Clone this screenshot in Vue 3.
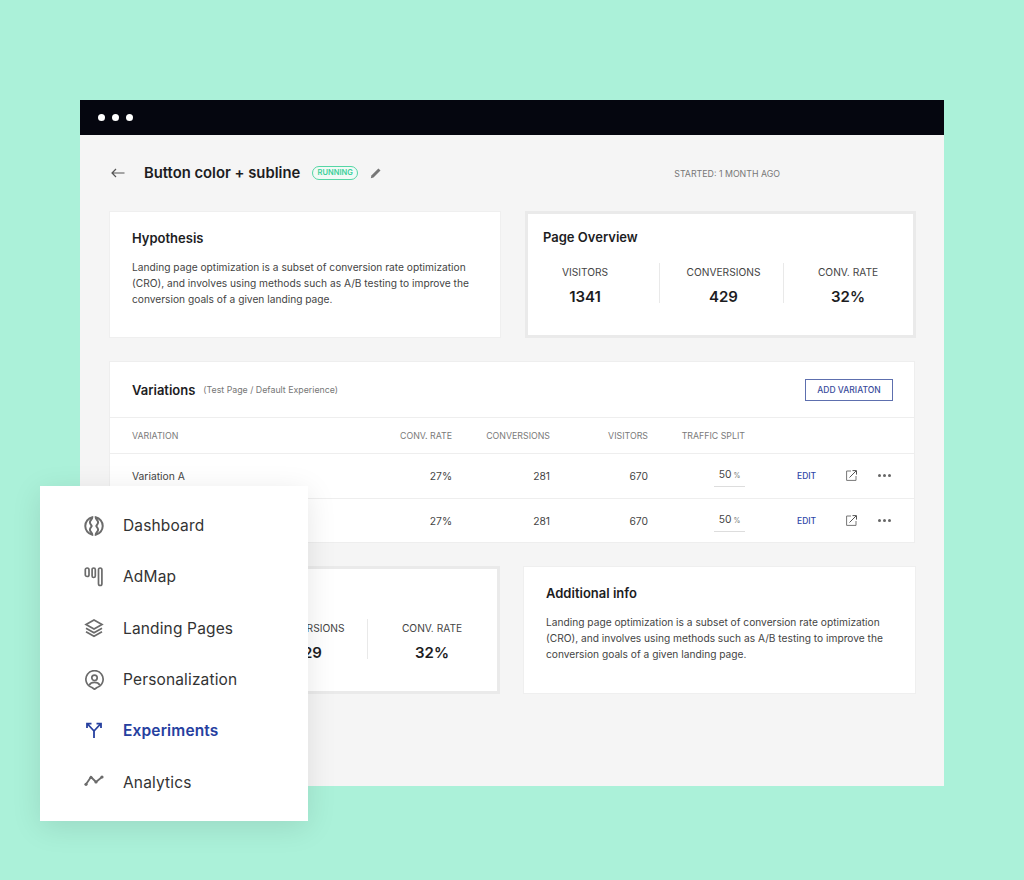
<script setup>
const stats = [
  { label: "VISITORS", value: "1341" },
  { label: "CONVERSIONS", value: "429" },
  { label: "CONV. RATE", value: "32%" },
];

// first cell of the lower card sits under the sidebar
const lowerStats = [
  { label: "", value: "" },
  { label: "CONVERSIONS", value: "429" },
  { label: "CONV. RATE", value: "32%" },
];

const rows = [
  { id: 1, name: "Variation A", rate: "27%", conversions: 281, visitors: 670, split: 50 },
  { id: 2, name: "", rate: "27%", conversions: 281, visitors: 670, split: 50 },
];

const hypothesis =
  "Landing page optimization is a subset of conversion rate optimization (CRO), and involves using methods such as A/B testing to improve the conversion goals of a given landing page.";

const nav = [
  { label: "Dashboard", icon: "dashboard" },
  { label: "AdMap", icon: "admap" },
  { label: "Landing Pages", icon: "layers" },
  { label: "Personalization", icon: "person" },
  { label: "Experiments", icon: "fork", active: true },
  { label: "Analytics", icon: "chart" },
];
</script>

<template>
  <div class="stage">
    <div class="window">
      <div class="titlebar">
        <span class="dot"></span>
        <span class="dot"></span>
        <span class="dot"></span>
      </div>
      <div class="content">
        <header class="page-head">
          <svg class="back" width="14" height="10" viewBox="0 0 14 10" fill="none">
            <path d="M13.500 5H1M5 1 1 5l4 4" stroke="#555" stroke-width="1.200" />
          </svg>
          <h1>Button color + subline</h1>
          <span class="badge">RUNNING</span>
          <svg class="pencil" width="12" height="12" viewBox="0 0 12 12">
            <path d="M.8 11.200 1.400 8.500 8.400 1.500l2.100 2.100-7 7z" fill="#777" />
          </svg>
          <span class="started">STARTED: 1 MONTH AGO</span>
        </header>

        <section class="card-row">
          <article class="card info">
            <h2>Hypothesis</h2>
            <p>{{ hypothesis }}</p>
          </article>
          <article class="card overview">
            <h2>Page Overview</h2>
            <div class="stats">
              <div v-for="s in stats" :key="s.label" class="stat">
                <span class="stat-label">{{ s.label }}</span>
                <strong>{{ s.value }}</strong>
              </div>
            </div>
          </article>
        </section>

        <section class="table-card">
          <div class="table-title">
            <h2>Variations</h2>
            <span class="sub">(Test Page / Default Experience)</span>
            <button class="add">ADD VARIATON</button>
          </div>
          <div class="grid-row heading">
            <span>VARIATION</span>
            <span class="num">CONV. RATE</span>
            <span class="num">CONVERSIONS</span>
            <span class="num">VISITORS</span>
            <span class="num">TRAFFIC SPLIT</span>
          </div>
          <div v-for="r in rows" :key="r.id" class="grid-row body-row">
            <span>{{ r.name }}</span>
            <span class="num">{{ r.rate }}</span>
            <span class="num">{{ r.conversions }}</span>
            <span class="num">{{ r.visitors }}</span>
            <span class="split">{{ r.split }}<small>%</small></span>
            <span class="actions">
              <a class="edit">EDIT</a>
              <svg class="open" width="11" height="11" viewBox="0 0 11 11" fill="none">
                <path d="M5 1H.6v9.400H10V6" stroke="#777" />
                <path d="M3.500 7.500 10 1M6.500.6h4v4" stroke="#555" />
              </svg>
              <span class="more"><i></i><i></i><i></i></span>
            </span>
          </div>
        </section>

        <section class="card-row bottom">
          <article class="card overview">
            <div class="stats">
              <div v-for="(s, i) in lowerStats" :key="i" class="stat">
                <span class="stat-label">{{ s.label }}</span>
                <strong>{{ s.value }}</strong>
              </div>
            </div>
          </article>
          <article class="card info">
            <h2>Additional info</h2>
            <p>{{ hypothesis }}</p>
          </article>
        </section>
      </div>
    </div>

    <nav class="sidebar">
      <a v-for="item in nav" :key="item.label" :class="['nav-item', { active: item.active }]">
        <svg width="20" height="20" viewBox="0 0 20 20" fill="none" stroke="#6b6b6b" stroke-width="1.700">
          <template v-if="item.icon === 'dashboard'">
            <path stroke-width="2" d="M8.300 1.300a8.900 8.900 0 0 0 0 17.400c.1-2-2.400-2.900-2.400-4.900s1.800-2.800 1.800-3.800-1.800-1.800-1.800-3.800 2.500-2.900 2.400-4.900Z" />
            <path stroke-width="2" d="M11.700 1.300a8.900 8.900 0 0 1 0 17.400c-.1-2 2.400-2.900 2.400-4.900s-1.800-2.800-1.800-3.800 1.800-1.800 1.800-3.800-2.500-2.900-2.400-4.900Z" />
          </template>
          <template v-else-if="item.icon === 'admap'">
            <rect x="1.300" y="1" width="3.700" height="8.500" rx="1.800" />
            <rect x="8.100" y="1" width="3.200" height="9.500" rx="1.600" />
            <rect x="14.500" y="1" width="3.400" height="17.500" rx="1.700" />
          </template>
          <template v-else-if="item.icon === 'layers'">
            <path d="M10 2 18 6.500 10 11 2 6.500Z" />
            <path d="M2 10.200 10 14.700l8-4.500M2 13.800l8 4.500 8-4.500" />
          </template>
          <template v-else-if="item.icon === 'person'">
            <g transform="translate(.5 0)">
              <path d="M10 19.300 7.500 17.500A8.600 8.600 0 1 1 12.500 17.500Z" />
              <circle cx="10" cy="7.800" r="2.700" />
              <path d="M4.800 15c1-2 3-2.600 5.200-2.600s4.200.6 5.200 2.600" />
            </g>
          </template>
          <template v-else-if="item.icon === 'fork'">
            <path d="M10 17V10L3.500 3M10 10l6.500-7M3 7V2.700h4.500M12.500 2.700H17V7" stroke="#26409f" stroke-width="1.800" />
          </template>
          <template v-else>
            <path d="M2 12.300 7 5l5 5 6-5" stroke-width="1.800" />
            <circle cx="2" cy="12.300" r="1.600" fill="#6b6b6b" stroke="none" />
            <circle cx="7" cy="5.500" r="1.600" fill="#6b6b6b" stroke="none" />
            <circle cx="12" cy="10" r="1.600" fill="#6b6b6b" stroke="none" />
            <circle cx="18" cy="5" r="1.600" fill="#6b6b6b" stroke="none" />
          </template>
        </svg>
        <span>{{ item.label }}</span>
      </a>
    </nav>
  </div>
</template>

<style scoped>
.stage {
  position: relative;
  width: 1024px;
  height: 880px;
  box-sizing: border-box;
  padding: 100px 80px 94px;
  background: #abf1d9;
  font-family: Inter, "Liberation Sans", sans-serif;
  color: #1d1d1f;
  overflow: hidden;
}
.window {
  height: 686px;
  background: #f5f5f5;
}
.titlebar {
  height: 35px;
  background: #05060f;
  display: flex;
  align-items: center;
  gap: 7px;
  padding-left: 18px;
}
.dot {
  width: 7px;
  height: 7px;
  border-radius: 50%;
  background: #fff;
}
.content {
  padding: 26px 28px 0 29px;
}
.page-head {
  height: 24px;
  display: flex;
  align-items: center;
  margin-bottom: 26px;
}
.back {
  margin-left: 2px;
  margin-right: 19px;
}
h1 {
  margin: 0;
  font-size: 14.800px;
  font-weight: 600;
  color: #1d1d1f;
}
.badge {
  margin-left: 12px;
  width: 46px;
  height: 14px;
  box-sizing: border-box;
  border: 1px solid #55d6a5;
  border-radius: 7px;
  font-size: 7.500px;
  font-weight: 600;
  line-height: 12px;
  text-align: center;
  color: #3bd09a;
  background: #f2faf6;
}
.pencil {
  margin-left: 12px;
}
.started {
  margin-left: auto;
  margin-right: 136px;
  font-size: 8.800px;
  color: #777;
}
.card-row {
  display: grid;
  grid-template-columns: 392px 391px;
  justify-content: space-between;
  height: 127px;
  margin-bottom: 23px;
}
.card-row.bottom {
  height: 128px;
  grid-template-columns: 391px 393px;
}
.card {
  background: #fff;
  box-sizing: border-box;
}
.info {
  border: 1px solid #efefef;
  padding: 18px 22px;
}
h2 {
  margin: 0;
  font-size: 13px;
  font-weight: 600;
  line-height: 16px;
  color: #1d1d1f;
}
.info p {
  margin: 13px 0 0;
  font-size: 10.200px;
  line-height: 16px;
  color: #444;
}
.overview {
  border: 3px solid #eaeaea;
  padding: 15px 15px;
}
.stats {
  display: grid;
  grid-template-columns: 117px 124px 1fr;
  margin-top: 18px;
}
.bottom .stats {
  margin-top: 35px;
}
.stat {
  height: 40px;
  display: flex;
  flex-direction: column;
  align-items: center;
  border-right: 1px solid #e9e9e9;
}
.stat:first-child {
  padding-right: 32px;
}
.stat:nth-child(2) {
  padding-left: 4px;
}
.stat:last-child {
  border-right: 0;
  padding-left: 14px;
}
.stat-label {
  font-size: 10.200px;
  line-height: 18px;
  min-height: 18px;
  color: #444;
}
.stat strong {
  margin-top: 7px;
  font-size: 15px;
  font-weight: 600;
  line-height: 18px;
  color: #1d1d1f;
}
.table-card {
  background: #fff;
  border: 1px solid #eeeeee;
  box-sizing: border-box;
  height: 182px;
  margin-bottom: 23px;
  width: 806px;
}
.table-title {
  height: 56px;
  box-sizing: border-box;
  display: flex;
  align-items: center;
  padding: 0 21px 0 22px;
  border-bottom: 1px solid #eeeeee;
}
.table-title h2 {
  font-size: 13px;
}
.sub {
  margin-left: 8px;
  font-size: 8.800px;
  color: #777;
}
.add {
  margin-left: auto;
  width: 88px;
  height: 22px;
  padding: 0;
  background: #fff;
  border: 1px solid #5d6fae;
  font-family: inherit;
  font-size: 8.500px;
  font-weight: 500;
  color: #3a4c9c;
}
.grid-row {
  display: grid;
  grid-template-columns: 220px 100px 98px 98px 97px auto;
  align-items: center;
  box-sizing: border-box;
  padding-left: 22px;
  border-bottom: 1px solid #eeeeee;
}
.grid-row:last-child {
  border-bottom: 0;
}
.heading {
  height: 36px;
  font-size: 8.800px;
  color: #7a7a7a;
}
.body-row {
  height: 44.500px;
  font-size: 10.300px;
  color: #444;
}
.num {
  text-align: right;
}
.split {
  justify-self: end;
  width: 31px;
  box-sizing: border-box;
  height: 23px;
  line-height: 21px;
  text-align: center;
  border-bottom: 1px solid #ddd;
}
.split small {
  margin-left: 2px;
  font-size: 7px;
  color: #777;
}
.actions {
  display: flex;
  align-items: center;
  margin-left: 52px;
}
.edit {
  width: 19px;
  font-size: 8.500px;
  font-weight: 500;
  color: #2f47a8;
}
.open {
  margin-left: 30px;
}
.more {
  margin-left: 21px;
  display: flex;
  gap: 2px;
}
.more i {
  width: 3px;
  height: 3px;
  border-radius: 50%;
  background: #666;
}
.sidebar {
  position: absolute;
  left: 40px;
  top: 486px;
  width: 268px;
  height: 335px;
  box-sizing: border-box;
  padding: 14px 0 13px;
  background: #fff;
  box-shadow: 0 6px 28px rgba(0, 0, 0, 0.1);
  display: flex;
  flex-direction: column;
}
.nav-item {
  flex: 1;
  display: flex;
  align-items: center;
  gap: 19px;
  padding-left: 44px;
  font-size: 15.500px;
  letter-spacing: 0.15px;
  color: #333;
}
.nav-item.active {
  font-weight: 600;
  color: #26409f;
}
</style>
